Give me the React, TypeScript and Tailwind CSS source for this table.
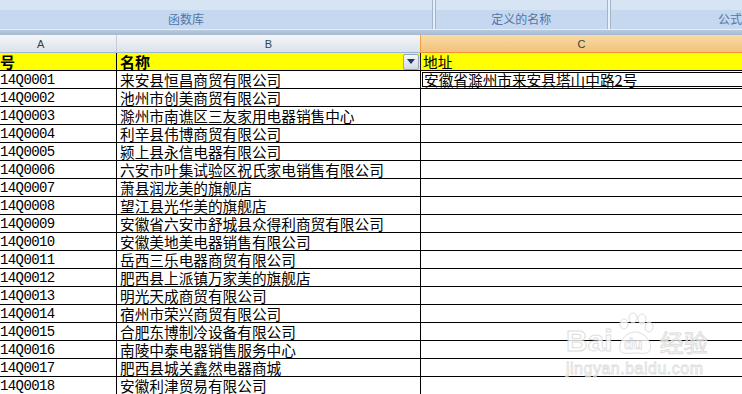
import React from "react";

const rows: [string, string][] = [
  ["14Q0001", "来安县恒昌商贸有限公司"],
  ["14Q0002", "池州市创美商贸有限公司"],
  ["14Q0003", "滁州市南谯区三友家用电器销售中心"],
  ["14Q0004", "利辛县伟博商贸有限公司"],
  ["14Q0005", "颍上县永信电器有限公司"],
  ["14Q0006", "六安市叶集试验区祝氏家电销售有限公司"],
  ["14Q0007", "萧县润龙美的旗舰店"],
  ["14Q0008", "望江县光华美的旗舰店"],
  ["14Q0009", "安徽省六安市舒城县众得利商贸有限公司"],
  ["14Q0010", "安徽美地美电器销售有限公司"],
  ["14Q0011", "岳西三乐电器商贸有限公司"],
  ["14Q0012", "肥西县上派镇万家美的旗舰店"],
  ["14Q0013", "明光天成商贸有限公司"],
  ["14Q0014", "宿州市荣兴商贸有限公司"],
  ["14Q0015", "合肥东博制冷设备有限公司"],
  ["14Q0016", "南陵中泰电器销售服务中心"],
  ["14Q0017", "肥西县城关鑫然电器商城"],
  ["14Q0018", "安徽利津贸易有限公司"],
];

const cjk = "font-['Noto_Sans_CJK_SC',sans-serif]";
const mono = "font-['Liberation_Mono','Noto_Sans_CJK_SC',monospace]";

function Separator() {
  return (
    <div className="w-[4px] h-full border-l border-r border-[#9fb5d0] bg-[#e8eff8]" />
  );
}

function Ribbon() {
  return (
    <div className="h-[29px] flex bg-[linear-gradient(to_bottom,#d7e4f3_0px,#d7e4f3_10px,#c5d8ef_10px,#c5d8ef_100%)]">
      <div className="w-[433px] flex items-end pb-[3px] pl-[168px]">
        <span className={`${cjk} text-[12px] leading-[14px] text-[#5275a6]`}>函数库</span>
      </div>
      <Separator />
      <div className="w-[172px] flex items-end justify-center pb-[3px]">
        <span className={`${cjk} text-[12px] leading-[14px] text-[#5275a6]`}>定义的名称</span>
      </div>
      <Separator />
      <div className="flex-1 flex items-end pb-[3px] pl-[107px]">
        <span className={`${cjk} text-[12px] leading-[14px] text-[#5275a6] whitespace-nowrap`}>公式</span>
      </div>
    </div>
  );
}

function ColumnHeaders() {
  return (
    <div className="h-[18px] flex">
      <div className="w-[117px] flex items-center pl-[37px] border-r border-b border-r-[#c3ccd8] border-b-[#9db5ce] bg-[linear-gradient(to_bottom,#f4f6f9,#dce2ea)]">
        <span className="font-['Liberation_Sans',sans-serif] text-[11px] leading-[12px] text-[#2a4646]">A</span>
      </div>
      <div className="w-[303px] flex items-center justify-center border-b border-b-[#9db5ce] bg-[linear-gradient(to_bottom,#f4f6f9,#dce2ea)]">
        <span className="font-['Liberation_Sans',sans-serif] text-[11px] leading-[12px] text-[#2a4646]">B</span>
      </div>
      <div className="flex-1 flex items-center justify-center border-l border-b border-l-[#f0a13f] border-b-[#f2903a] bg-[linear-gradient(to_bottom,#f9dba6,#f2c27a)]">
        <span className="font-['Liberation_Sans',sans-serif] text-[11px] leading-[12px] text-[#2a4646]">C</span>
      </div>
    </div>
  );
}

function Watermark() {
  return (
    <div className="absolute left-[566px] top-[312px] pointer-events-none select-none opacity-80">
      <div className="flex items-end h-[44px]">
        <span className="font-['Liberation_Sans',sans-serif] font-bold text-[30px] leading-none text-white [-webkit-text-stroke:1px_#d6d6d6]">Bai</span>
        <svg width="44" height="44" viewBox="0 0 44 44" className="ml-[1px]">
          <g fill="#fff" stroke="#d6d6d6" strokeWidth="1">
            <ellipse cx="10" cy="12" rx="4" ry="5" />
            <ellipse cx="19" cy="6" rx="4" ry="5" />
            <ellipse cx="28" cy="7" rx="4" ry="5" />
            <ellipse cx="35" cy="15" rx="4" ry="5" />
            <path d="M6 38 C4 30 12 20 21 20 C30 20 39 30 36 38 C34 43 27 41 21 41 C15 41 8 43 6 38 Z" />
          </g>
          <text x="10" y="37" fontFamily="Liberation Sans, sans-serif" fontWeight="bold" fontSize="15" fill="#fff" stroke="#d6d6d6" strokeWidth="0.8">du</text>
        </svg>
        <span className={`${cjk} text-[24px] leading-none ml-[2px] mb-[2px] text-white [-webkit-text-stroke:1px_#d6d6d6]`}>经验</span>
      </div>
      <div className="font-['Liberation_Sans',sans-serif] text-[16px] leading-none mt-[5px] text-white [-webkit-text-stroke:0.8px_#d6d6d6] tracking-[0.5px]">
        jingyan.baidu.com
      </div>
    </div>
  );
}

export default function App() {
  return (
    <div className="w-[742px] h-[394px] overflow-hidden relative bg-white">
      <Ribbon />
      <div className="h-[1px] bg-[#e4ecf6]" />
      <div className="h-[5px] bg-[linear-gradient(to_bottom,#b9cadd,#a5b9d0)]" />
      <ColumnHeaders />

      {/* row 1: header cells */}
      <div className="h-[18px] flex bg-[#ffff00] border-b border-black">
        <div className={`w-[117px] flex items-center border-r border-black ${cjk} font-bold text-[15px] leading-[16px] text-black`}>
          号
        </div>
        <div className="w-[303px] flex items-center pl-[3px] pr-[1px]">
          <span className={`${cjk} font-bold text-[15px] leading-[16px] text-black flex-1`}>名称</span>
          <div className="w-[16px] h-[16px] rounded-[2px] border border-[#97a6ba] bg-[linear-gradient(to_bottom,#f3f5f9,#d3dae5)] flex items-center justify-center">
            <svg width="8" height="5" viewBox="0 0 8 5">
              <path d="M0 0 H8 L4 5 Z" fill="#1d3768" />
            </svg>
          </div>
        </div>
        <div className={`flex-1 flex items-center pl-[2px] border-l border-[#1a1a1a] ${cjk} text-[14.67px] leading-[16px] text-black`}>
          地址
        </div>
      </div>

      {rows.map(([code, name], i) => (
        <div key={code} className="h-[18px] flex border-b border-black">
          <div className={`w-[117px] flex items-center border-r border-black ${mono} text-[14px] tracking-[-0.6px] leading-[16px] text-black`}>
            {code}
          </div>
          <div className={`w-[304px] flex items-center pl-[3px] border-r border-black ${cjk} text-[14.67px] leading-[16px] text-black whitespace-nowrap`}>
            {name}
          </div>
          <div className={`flex-1 relative flex items-center pl-[3px] ${cjk} text-[14.67px] leading-[16px] text-black whitespace-nowrap`}>
            {i === 0 && (
              <>
                <div className="absolute left-[1px] top-[1px] right-[-2px] bottom-[1px] border border-black" />
                安徽省滁州市来安县塔山中路2号
              </>
            )}
          </div>
        </div>
      ))}

      <Watermark />
    </div>
  );
}
